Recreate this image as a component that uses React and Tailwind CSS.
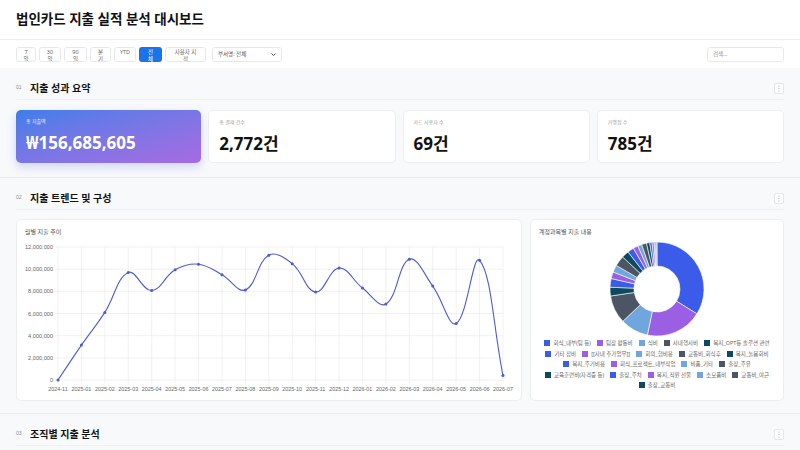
import React from "react";

const FONT = "font-['Noto_Sans','Noto_Sans_CJK_KR',sans-serif]";

const MONTHS = [
  "2024-11", "2025-01", "2025-02", "2025-03", "2025-04", "2025-05", "2025-06",
  "2025-07", "2025-08", "2025-09", "2025-10", "2025-11", "2025-12", "2026-01",
  "2026-02", "2026-03", "2026-04", "2026-05", "2026-06", "2026-07",
];
const VALUES = [0, 3.15, 6.1, 9.7, 8.07, 9.94, 10.45, 9.5, 8.13, 11.26, 10.5, 7.93, 10.1, 8.3, 6.85, 10.9, 8.47, 5.1, 10.8, 0.4];

const PALETTE = ["#3b5ce8", "#9b5fe3", "#6fa6de", "#4b5563", "#0e4a5e"];

const CATEGORIES = [
  ["회식_내부(팀 등)", 34],
  ["팀장 활동비", 19.5],
  ["식비", 9.7],
  ["사내행사비", 9.7],
  ["복지_OPT등 솔루션 관련", 3],
  ["기타 잡비", 3],
  ["[[사내 추가업무]]", 2.3],
  ["회의_협비용", 2.5],
  ["교통비_회식후", 3.6],
  ["복지_놀봄회비", 2.5],
  ["복지_주거비용", 2.2],
  ["회식_프로젝트_내부작업", 1.7],
  ["비품_기타", 1.4],
  ["출장_주유", 1.7],
  ["교육훈련비(자격증 등)", 1.1],
  ["출장_주차", 0.8],
  ["복지_직원 선물", 0.7],
  ["소모품비", 0.4],
  ["교통비_야근", 0.4],
  ["출장_교통비", 0.2],
];

const LEGEND_ROWS = [[0, 1, 2, 3, 4], [5, 6, 7, 8, 9], [10, 11, 12, 13], [14, 15, 16, 17, 18], [19]];

function Kebab() {
  return (
    <div className="w-[10px] h-[11px] rounded-[2px] border border-[#e3e6ea] bg-white flex items-center justify-center">
      <svg width="2" height="7" viewBox="0 0 2 7">
        <circle cx="1" cy="1" r="0.6" fill="#9ca3af" />
        <circle cx="1" cy="3.5" r="0.6" fill="#9ca3af" />
        <circle cx="1" cy="6" r="0.6" fill="#9ca3af" />
      </svg>
    </div>
  );
}

function SectionHeader({ num, title }) {
  return (
    <div className="h-[20px] pb-[3px] flex items-center justify-between border-b border-[#eceff3]">
      <div className="flex items-center">
        <span className="w-[14px] text-[5px] text-[#8a8f98] font-['Liberation_Sans',sans-serif]">{num}</span>
        <span className="text-[10px] font-bold text-[#111]">{title}</span>
      </div>
      <Kebab />
    </div>
  );
}

function StatCard({ label, value, primary }) {
  return (
    <div
      className={
        primary
          ? "flex-1 h-[53px] rounded-[5px] bg-linear-to-br from-[#3a7ee9] to-[#a66ae1] shadow-[0_4px_10px_rgba(80,110,230,0.25)] px-[10px] pt-[8px]"
          : "flex-1 h-[53px] rounded-[5px] bg-white border border-[#eceef1] px-[10px] pt-[8px]"
      }
    >
      <div className={primary ? "text-[5px] text-white/85 h-[9px]" : "text-[5px] text-[#9aa0a8] h-[9px]"}>{label}</div>
      <div className={primary ? "text-[17px] font-bold text-white leading-[26px] mt-[3px]" : "text-[17px] font-bold text-[#111] leading-[26px] mt-[3px]"}>
        {value}
      </div>
    </div>
  );
}

function splinePath(pts, t = 0.4) {
  const cps = pts.map((p, i) => {
    const p0 = pts[i - 1] || p;
    const p2 = pts[i + 1] || p;
    const d01 = Math.hypot(p[0] - p0[0], p[1] - p0[1]);
    const d12 = Math.hypot(p2[0] - p[0], p2[1] - p[1]);
    const sum = d01 + d12 || 1;
    const fa = (t * d01) / sum;
    const fb = (t * d12) / sum;
    return {
      prev: [p[0] - fa * (p2[0] - p0[0]), p[1] - fa * (p2[1] - p0[1])],
      next: [p[0] + fb * (p2[0] - p0[0]), p[1] + fb * (p2[1] - p0[1])],
    };
  });
  let d = `M${pts[0][0]},${pts[0][1]}`;
  for (let i = 1; i < pts.length; i++) {
    const a = cps[i - 1].next;
    const b = cps[i].prev;
    d += ` C${a[0]},${a[1]} ${b[0]},${b[1]} ${pts[i][0]},${pts[i][1]}`;
  }
  return d;
}

function LineChart() {
  const x0 = 41;
  const x1 = 486;
  const yTop = 7;
  const yBot = 140;
  const step = (x1 - x0) / (MONTHS.length - 1);
  const yOf = (v) => yBot - ((yBot - yTop) * v) / 12;
  const pts = VALUES.map((v, i) => [x0 + i * step, yOf(v)]);
  const ticks = [0, 2, 4, 6, 8, 10, 12];

  return (
    <svg width="504" height="160" viewBox="0 0 504 160" className="block">
      {ticks.map((t) => (
        <g key={t}>
          <line x1={x0 - 3} x2={x1} y1={yOf(t)} y2={yOf(t)} stroke="#ebebeb" strokeWidth="0.7" />
          <text x={x0 - 5} y={yOf(t) + 2} textAnchor="end" fontSize="5.6" fill="#666" fontFamily="Liberation Sans, Arial, sans-serif">
            {t === 0 ? "0" : `${t},000,000`}
          </text>
        </g>
      ))}
      {MONTHS.map((m, i) => (
        <g key={m}>
          <line x1={x0 + i * step} x2={x0 + i * step} y1={yTop} y2={yBot + 3} stroke="#ebebeb" strokeWidth="0.7" />
          <text x={x0 + i * step} y={yBot + 11} textAnchor="middle" fontSize="5.4" fill="#666" fontFamily="Liberation Sans, Arial, sans-serif">
            {m}
          </text>
        </g>
      ))}
      <path d={splinePath(pts)} fill="none" stroke="#4c5bd4" strokeWidth="1.1" />
      {pts.map((p, i) => (
        <circle key={i} cx={p[0]} cy={p[1]} r="1.5" fill="#4c5bd4" />
      ))}
    </svg>
  );
}

function Donut() {
  const total = CATEGORIES.reduce((a, c) => a + c[1], 0);
  const cx = 48;
  const cy = 48;
  const R = 47;
  const r = 23;
  let acc = 0;
  const pt = (rad, ang) => [cx + rad * Math.sin(ang), cy - rad * Math.cos(ang)];
  return (
    <svg width="96" height="96" viewBox="0 0 96 96" className="block">
      {CATEGORIES.map(([name, v], i) => {
        const a0 = (acc / total) * Math.PI * 2;
        acc += v;
        const a1 = (acc / total) * Math.PI * 2;
        const large = a1 - a0 > Math.PI ? 1 : 0;
        const [ox0, oy0] = pt(R, a0);
        const [ox1, oy1] = pt(R, a1);
        const [ix1, iy1] = pt(r, a1);
        const [ix0, iy0] = pt(r, a0);
        const d = `M${ox0},${oy0} A${R},${R} 0 ${large} 1 ${ox1},${oy1} L${ix1},${iy1} A${r},${r} 0 ${large} 0 ${ix0},${iy0} Z`;
        return <path key={name} d={d} fill={PALETTE[i % 5]} stroke="#fff" strokeWidth="0.6" />;
      })}
    </svg>
  );
}

function FilterButton({ lines, width, active }) {
  return (
    <div
      className={
        active
          ? "h-[15px] rounded-[3px] bg-[#1a73e8] text-white overflow-hidden flex flex-col items-center pt-[2px]"
          : "h-[15px] rounded-[3px] bg-white border border-[#e6e8eb] text-[#666] overflow-hidden flex flex-col items-center pt-[1px]"
      }
      style={{ width }}
    >
      {lines.map((l) => (
        <span key={l} className="text-[5.5px] leading-[7px] whitespace-nowrap">
          {l}
        </span>
      ))}
    </div>
  );
}

export default function App() {
  return (
    <div className={`${FONT} w-[800px] h-[450px] overflow-hidden bg-[#f8f9fb]`}>
      <div className="h-[40px] bg-white border-b border-[#eceef1] flex items-center px-4">
        <h1 className="text-[13.5px] font-bold text-[#111]">법인카드 지출 실적 분석 대시보드</h1>
      </div>

      <div className="h-[28px] bg-white flex items-center justify-between px-4">
        <div className="flex items-center gap-[3px]">
          <FilterButton lines={["7", "일"]} width={20} />
          <FilterButton lines={["30", "일"]} width={22} />
          <FilterButton lines={["90", "일"]} width={23} />
          <FilterButton lines={["분", "기"]} width={21} />
          <FilterButton lines={["YTD"]} width={22} />
          <FilterButton lines={["전", "체"]} width={23} active />
          <FilterButton lines={["사용자 지", "정"]} width={41} />
          <div className="ml-[3px] w-[70px] h-[15px] rounded-[3px] bg-white border border-[#e6e8eb] flex items-center justify-between px-[5px]">
            <span className="text-[5.5px] text-[#555]">부서명: 전체</span>
            <svg width="5" height="3" viewBox="0 0 5 3">
              <path d="M0.5 0.5 L2.5 2.5 L4.5 0.5" fill="none" stroke="#333" strokeWidth="0.9" />
            </svg>
          </div>
        </div>
        <div className="w-[77px] h-[15px] rounded-[3px] bg-white border border-[#e6e8eb] flex items-center px-[5px]">
          <span className="text-[5.5px] text-[#8a8f98]">검색...</span>
        </div>
      </div>

      <section className="px-4 pt-[12px] pb-[14px]">
        <SectionHeader num="01" title="지출 성과 요약" />
        <div className="mt-[10px] flex gap-[7px]">
          <StatCard primary label="총 지출액" value="₩156,685,605" />
          <StatCard label="총 결제 건수" value="2,772건" />
          <StatCard label="카드 사용자 수" value="69건" />
          <StatCard label="가맹점 수" value="785건" />
        </div>
      </section>

      <section className="px-4 pt-[12px] pb-[12px] border-t border-[#e8ebef]">
        <SectionHeader num="02" title="지출 트렌드 및 구성" />
        <div className="mt-[9px] flex gap-[8px]">
          <div className="w-[506px] h-[182px] rounded-[5px] bg-white border border-[#eceef1] pt-[8px]">
            <div className="h-[12px] pl-[8px] text-[6px] text-[#555] leading-[8px]">월별 지출 추이</div>
            <LineChart />
          </div>
          <div className="flex-1 h-[182px] rounded-[5px] bg-white border border-[#eceef1] pt-[8px] flex flex-col items-center">
            <div className="self-start h-[13px] pl-[8px] text-[6px] text-[#555] leading-[8px]">계정과목별 지출 내용</div>
            <Donut />
            <div className="mt-[1px] flex flex-col">
              {LEGEND_ROWS.map((row, ri) => (
                <div key={ri} className="h-[10.5px] flex items-center justify-center gap-[6px]">
                  {row.map((i) => (
                    <div key={i} className="flex items-center gap-[3px]">
                      <span className="w-[6px] h-[6px]" style={{ background: PALETTE[i % 5] }} />
                      <span className="text-[5.5px] text-[#666] whitespace-nowrap">{CATEGORIES[i][0]}</span>
                    </div>
                  ))}
                </div>
              ))}
            </div>
          </div>
        </div>
      </section>

      <section className="px-4 pt-[12px] border-t border-[#e8ebef]">
        <SectionHeader num="03" title="조직별 지출 분석" />
      </section>
    </div>
  );
}
